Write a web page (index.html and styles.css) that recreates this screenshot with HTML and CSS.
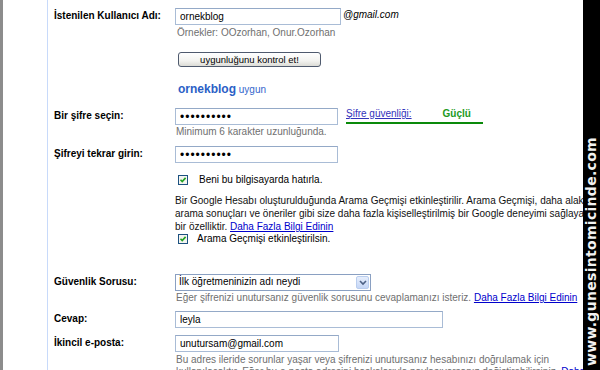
FILE: index.html
```html
<!DOCTYPE html>
<html lang="tr">
<head>
<meta charset="utf-8">
<title>Google Hesabı</title>
<link rel="stylesheet" href="styles.css">
</head>
<body>
<div class="page">
  <div class="edge"></div>
  <div class="content">
    <div class="row row-user">
      <div class="lbl">İstenilen Kullanıcı Adı:</div>
      <div class="field">
        <div class="line">
          <input class="txt w166" type="text" value="ornekblog">
          <span class="domain">@gmail.com</span>
        </div>
        <div class="hint hint-examples">Örnekler: OOzorhan, Onur.Ozorhan</div>
        <button class="btn" type="button">uygunluğunu kontrol et!</button>
        <div class="avail"><b>ornekblog</b> <span>uygun</span></div>
      </div>
    </div>

    <div class="row row-pass">
      <div class="lbl">Bir şifre seçin:</div>
      <div class="field">
        <div class="line">
          <input class="txt pwd w163" type="password" value="abcdefghij">
          <div class="strength">
            <a href="#" class="slink">Şifre güvenliği:</a>
            <span class="strong">Güçlü</span>
          </div>
        </div>
        <div class="hint hint-min">Minimum 6 karakter uzunluğunda.</div>
      </div>
    </div>

    <div class="row row-again">
      <div class="lbl">Şifreyi tekrar girin:</div>
      <div class="field">
        <input class="txt pwd w163" type="password" value="abcdefghij">
        <div class="check check-remember">
          <span class="box"><svg width="10" height="10" viewBox="0 0 10 10"><rect x="0.5" y="0.5" width="9" height="9" fill="#f4f4f0" stroke="#1c5180"/><path d="M2.5 4.8 L4.2 6.6 L7.6 2.9" fill="none" stroke="#21a121" stroke-width="1.6"/></svg></span>
          <span>Beni bu bilgisayarda hatırla.</span>
        </div>
        <p class="para">Bir Google Hesabı oluşturulduğunda Arama Geçmişi etkinleştirilir. Arama Geçmişi, daha alakalı<br>arama sonuçları ve öneriler gibi size daha fazla kişiselleştirilmiş bir Google deneyimi sağlayan<br>bir özelliktir. <a href="#">Daha Fazla Bilgi Edinin</a></p>
        <div class="check check-history">
          <span class="box"><svg width="10" height="10" viewBox="0 0 10 10"><rect x="0.5" y="0.5" width="9" height="9" fill="#f4f4f0" stroke="#1c5180"/><path d="M2.5 4.8 L4.2 6.6 L7.6 2.9" fill="none" stroke="#21a121" stroke-width="1.6"/></svg></span>
          <span>Arama Geçmişi etkinleştirilsin.</span>
        </div>
      </div>
    </div>

    <div class="row row-question">
      <div class="lbl">Güvenlik Sorusu:</div>
      <div class="field">
        <div class="select">
          <span class="sel-text">İlk öğretmeninizin adı neydi</span>
          <span class="sel-arrow"><svg width="8" height="6" viewBox="0 0 8 6"><path d="M1 1 L4 4 L7 1" fill="none" stroke="#4d6185" stroke-width="1.6"/></svg></span>
        </div>
        <div class="hint hint-q">Eğer şifrenizi unutursanız güvenlik sorusunu cevaplamanızı isteriz. <a href="#">Daha Fazla Bilgi Edinin</a></div>
      </div>
    </div>

    <div class="row row-answer">
      <div class="lbl">Cevap:</div>
      <div class="field">
        <input class="txt w268" type="text" value="leyla">
      </div>
    </div>

    <div class="row row-mail">
      <div class="lbl">İkincil e-posta:</div>
      <div class="field">
        <input class="txt w164" type="text" value="unutursam@gmail.com">
        <div class="hint hint-mail">Bu adres ileride sorunlar yaşar veya şifrenizi unutursanız hesabınızı doğrulamak için<br>kullanılacaktır. Eğer bu e-posta adresini başkalarıyla paylaşıyorsanız değiştirebilirsiniz. <a href="#">Daha</a></div>
      </div>
    </div>
  </div>
  <div class="strip"><span class="mark">www.gunesintomicinde.com</span></div>
</div>
</body>
</html>
```
FILE: styles.css
```css
html, body {
  margin: 0;
  padding: 0;
  background: #fff;
}
body {
  font-family: "Liberation Sans", Arial, sans-serif;
  font-size: 10px;
  line-height: 12px;
  color: #000;
  overflow: hidden;
}
.page {
  display: flex;
  width: 600px;
  height: 370px;
  overflow: hidden;
}
.edge {
  width: 3px;
  background: #8c8c8c;
  flex: none;
}
.content {
  flex: 1;
  min-width: 0;
  margin-left: 44px;
  border-left: 1px solid #c8dafa;
  padding: 8px 0 0 6px;
  overflow: hidden;
  white-space: nowrap;
}
.strip {
  width: 17px;
  flex: none;
  background: #000;
  display: flex;
  flex-direction: column;
  justify-content: flex-end;
  align-items: center;
  padding-bottom: 4px;
  box-sizing: border-box;
}
.mark {
  writing-mode: vertical-rl;
  transform: rotate(180deg);
  font-family: "DejaVu Sans", sans-serif;
  font-weight: bold;
  font-size: 14px;
  line-height: 17px;
  color: #f2f2f2;
  letter-spacing: 0.3px;
}
.row {
  display: grid;
  grid-template-columns: 121px 1fr;
}
.lbl {
  font-weight: bold;
  padding-top: 2px;
}
.field {
  min-width: 0;
}
.line {
  display: flex;
  align-items: flex-start;
}
.txt {
  box-sizing: border-box;
  height: 17px;
  margin: 0;
  padding: 0 4px;
  border: 1px solid #a9bcd6;
  border-top-color: #94a9c7;
  font-family: "Liberation Sans", Arial, sans-serif;
  font-size: 10px;
  color: #000;
  background: #fff;
  outline: none;
  display: block;
}
.w166 { width: 166px; }
.w163 { width: 163px; }
.w164 { width: 164px; }
.w268 { width: 268px; }
.pwd {
  font-size: 12px;
  letter-spacing: 1px;
}
.domain {
  font-style: italic;
  margin-left: 2px;
  padding-top: 1px;
}
.hint {
  color: #6f6f6f;
}
.hint a, .para a {
  color: #0000cc;
}
.hint-examples { margin-top: 2px; margin-left: 2px; }
.btn {
  display: block;
  margin: 13px 0 0 3px;
  width: 143px;
  height: 15px;
  padding: 0;
  border: 1px solid #4f5a6e;
  border-radius: 3px;
  background: linear-gradient(#ffffff, #f3f3f0 60%, #dcdcd6);
  font-family: "Liberation Sans", Arial, sans-serif;
  font-size: 9.5px;
  line-height: 13px;
  color: #000;
}
.avail {
  margin: 14px 0 0 3px;
  line-height: 16px;
  color: #3366cc;
}
.avail b {
  font-size: 12px;
  color: #2b5fc6;
}
.row-pass { margin-top: 10px; }
.strength {
  margin-left: 8px;
  width: 137px;
  height: 14px;
  border-bottom: 2px solid #0a8a0a;
  display: flex;
  align-items: flex-start;
}
.slink {
  color: #3333bb;
  text-decoration: underline;
}
.strong {
  margin-left: 31px;
  font-weight: bold;
  color: #229922;
}
.hint-min { margin-top: 1px; margin-left: 1px; }
.row-again { margin-top: 8px; }
.check {
  display: flex;
  align-items: center;
  margin-left: 3px;
}
.box {
  display: block;
  width: 10px;
  height: 10px;
  flex: none;
}
.box svg { display: block; }
.check-remember { margin-top: 11px; gap: 11px; }
.check-history { gap: 9px; }
.para {
  margin: 8px 0 0 0;
  line-height: 13px;
  color: #111;
}
.row-question { margin-top: 29px; }
.select {
  box-sizing: border-box;
  width: 196px;
  height: 17px;
  border: 1px solid #8aa0c2;
  display: flex;
  align-items: stretch;
  background: #fff;
}
.sel-text {
  flex: 1;
  padding: 1px 0 0 3px;
}
.sel-arrow {
  width: 13px;
  margin: 1px;
  box-sizing: border-box;
  border: 1px solid #b9cdee;
  border-radius: 2px;
  background: linear-gradient(#e6eefc, #c5d6f6);
  display: flex;
  align-items: center;
  justify-content: center;
}
.sel-arrow svg { display: block; }
.hint-q { margin-top: 1px; margin-left: 1px; }
.row-answer { margin-top: 7px; }
.row-mail { margin-top: 7px; }
.hint-mail { margin-top: 2px; margin-left: 1px; }
```
